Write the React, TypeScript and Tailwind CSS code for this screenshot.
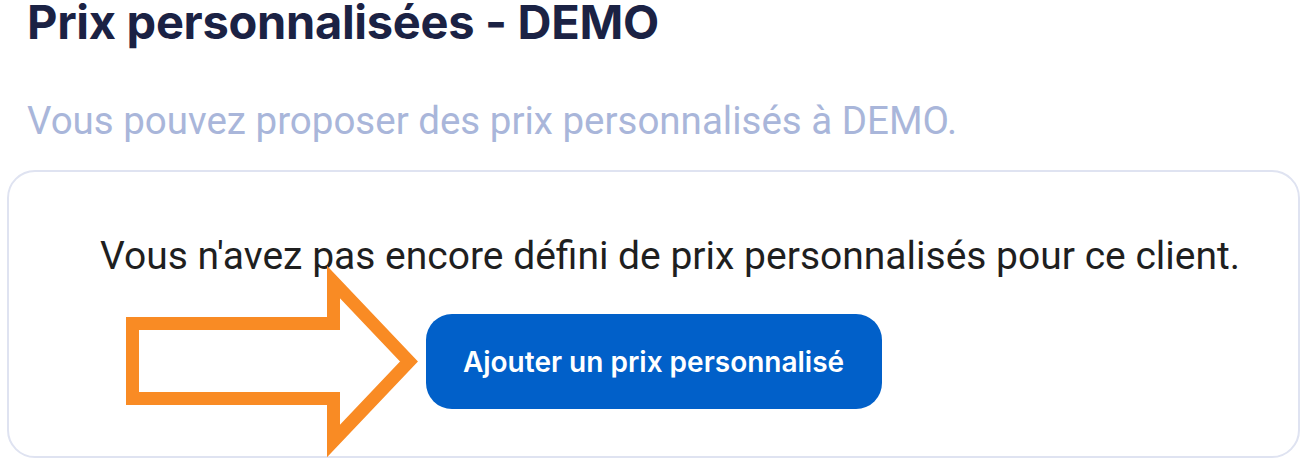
export default function App() {
  return (
    <div className="w-[1307px] h-[471px] bg-white overflow-hidden px-[7px]">
      <h1 className="pl-[20px] text-[47px] leading-[44px] font-bold text-[#1b2244] font-['Inter',sans-serif] tracking-[-0.3px]">
        Prix personnalisées - DEMO
      </h1>
      <p className="pl-[20px] mt-[57px] text-[38.5px] leading-[40px] text-[#a9b6da] font-['Roboto',sans-serif]">
        Vous pouvez proposer des prix personnalisés à DEMO.
      </p>
      <div className="relative mt-[29px] w-[1293px] h-[288px] rounded-[28px] border-2 border-[#dfe3f1] flex flex-col items-center pt-[62px]">
        <p className="text-[39px] leading-[44px] text-[#1f1f1f] font-['Roboto',sans-serif] pl-[33px] whitespace-nowrap">
          Vous n'avez pas encore défini de prix personnalisés pour ce client.
        </p>
        <button className="mt-[36px] w-[456px] h-[95px] rounded-[26px] bg-[#0160c9] text-white text-[28px] font-semibold font-['Inter',sans-serif]">
          Ajouter un prix personnalisé
        </button>
        {/* orange annotation arrow */}
        <svg
          className="absolute left-[100px] top-[90px]"
          width="330"
          height="200"
          viewBox="0 0 330 200"
        >
          <polygon
            points="23.5,61.5 224.5,61.5 224.5,20 300,99.5 224.5,179 224.5,136.5 23.5,136.5"
            fill="none"
            stroke="#f98b24"
            strokeWidth="13"
            strokeLinejoin="miter"
            strokeMiterlimit="10"
          />
        </svg>
      </div>
    </div>
  );
}
